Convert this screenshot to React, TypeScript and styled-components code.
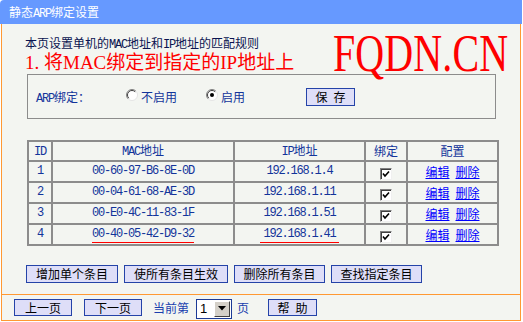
import React from 'react'
import styled, { createGlobalStyle, css } from 'styled-components'

const rows = [
  { id: 1, mac: '00-60-97-B6-8E-0D', ip: '192.168.1.4' },
  { id: 2, mac: '00-04-61-68-AE-3D', ip: '192.168.1.11' },
  { id: 3, mac: '00-E0-4C-11-83-1F', ip: '192.168.1.51' },
  { id: 4, mac: '00-40-05-42-D9-32', ip: '192.168.1.41', marked: true },
]

const colWidths = [24, 182, 131, 42, 91]
const actions = [
  { label: '增加单个条目', w: 92 },
  { label: '使所有条目生效', w: 104 },
  { label: '删除所有条目', w: 91 },
  { label: '查找指定条目', w: 91 },
]

const Radio = ({ checked }: { checked?: boolean }) => (
  <RadioIcon viewBox="0 0 12 12" width="12" height="12">
    <circle cx="6" cy="6" r="5.5" fill="#fff" />
    <path d="M2.1 9.9 A5.5 5.5 0 0 1 9.9 2.1" stroke="#808080" fill="none" />
    <path d="M2.8 9.2 A4.5 4.5 0 0 1 9.2 2.8" stroke="#404040" fill="none" />
    <path d="M9.9 2.1 A5.5 5.5 0 0 1 2.1 9.9" stroke="#e4e4e4" fill="none" />
    {checked && <circle cx="6" cy="6" r="2" fill="#000" />}
  </RadioIcon>
)

const CheckBox = () => (
  <CheckFrame>
    <svg viewBox="0 0 8 8" width="8" height="8">
      <polyline points="1,3.5 3,6 7,1.5" stroke="#000" strokeWidth="1.6" fill="none" />
    </svg>
  </CheckFrame>
)

export default function App() {
  return (
    <>
      <GlobalStyle />
      <Frame>
        <TitleBar>
          静态<Lat>ARP</Lat>绑定设置
        </TitleBar>
        <Panel>
          <Main>
            <TopRow>
              <div>
                <Note>
                  本页设置单机的<Lat>MAC</Lat>地址和<Lat>IP</Lat>地址的匹配规则
                </Note>
                <Hint>1. 将MAC绑定到指定的IP地址上</Hint>
              </div>
              <Logo>FQDN.CN</Logo>
            </TopRow>

            <SettingBox>
              <FieldLabel>
                <Lat>ARP</Lat>绑定：
              </FieldLabel>
              <Option $mr={29}>
                <Radio />
                不启用
              </Option>
              <Option>
                <Radio checked />
                启用
              </Option>
              <Button $w={49} $h={18} $ml={61}>
                保{'\u2002'}存
              </Button>
            </SettingBox>

            <Grid>
              <colgroup>
                {colWidths.map((w, i) => (
                  <col key={i} style={{ width: w }} />
                ))}
              </colgroup>
              <thead>
                <tr>
                  <HeadCell>
                    <Lat>ID</Lat>
                  </HeadCell>
                  <HeadCell>
                    <Lat>MAC</Lat>地址
                  </HeadCell>
                  <HeadCell>
                    <Lat>IP</Lat>地址
                  </HeadCell>
                  <HeadCell>绑定</HeadCell>
                  <HeadCell>配置</HeadCell>
                </tr>
              </thead>
              <tbody>
                {rows.map((r) => (
                  <tr key={r.id}>
                    <Cell $mono>{r.id}</Cell>
                    <Cell $mono>
                      <Marked $on={r.marked}>{r.mac}</Marked>
                    </Cell>
                    <Cell $mono>
                      <Marked $on={r.marked} $pad>
                        {r.ip}
                      </Marked>
                    </Cell>
                    <Cell>
                      <CheckBox />
                    </Cell>
                    <Cell>
                      <LinkGroup>
                        <TextLink>编辑</TextLink>
                        <TextLink>删除</TextLink>
                      </LinkGroup>
                    </Cell>
                  </tr>
                ))}
              </tbody>
            </Grid>

            <ActionRow>
              {actions.map((a) => (
                <Button key={a.label} $w={a.w} $h={18}>
                  {a.label}
                </Button>
              ))}
            </ActionRow>
          </Main>

          <Footer>
            <Button $w={58} $h={17}>
              上一页
            </Button>
            <Button $w={58} $h={17} $ml={12}>
              下一页
            </Button>
            <FootText $ml={11}>当前第</FootText>
            <PageSelect>
              <SelectValue>1</SelectValue>
              <DropButton>
                <svg viewBox="0 0 8 5" width="8" height="5">
                  <polygon points="0,0 8,0 4,4.5" fill="#000" />
                </svg>
              </DropButton>
            </PageSelect>
            <FootText $ml={5}>页</FootText>
            <Button $w={49} $h={17} $ml={19}>
              帮{'\u2002'}助
            </Button>
          </Footer>
        </Panel>
      </Frame>
    </>
  )
}

const GlobalStyle = createGlobalStyle`
  body {
    margin: 0;
    background: #fff;
    font-family: 'Noto Sans CJK SC', sans-serif;
    font-size: 12px;
  }
`

const Frame = styled('div')`
  width: 522px;
`

const TitleBar = styled('div')`
  height: 24px;
  line-height: 24px;
  padding-left: 9px;
  background: #6699ff;
  border-top-left-radius: 4px;
  color: #fff;
`

const Lat = styled('span')`
  font-family: 'Liberation Mono', monospace;
  letter-spacing: -1.2px;
`

const Panel = styled('div')`
  box-sizing: border-box;
  width: 520px;
  height: 297px;
  margin-left: 1px;
  display: flex;
  flex-direction: column;
  background: #f3f5f1;
  border: 1px solid #ff9933;
  border-top: none;
`

const Main = styled('div')`
  padding: 12px 11px 0 23px;
`

const TopRow = styled('div')`
  display: flex;
  justify-content: space-between;
  height: 36px;
`

const Note = styled('div')`
  line-height: 14px;
  color: #0a1450;
`

const Hint = styled('div')`
  font-family: 'Liberation Serif', 'Noto Sans CJK SC', serif;
  font-size: 19px;
  line-height: 22px;
  color: #ff0000;
  white-space: nowrap;
`

const Logo = styled('div')`
  flex-shrink: 0;
  width: 176px;
  height: 36px;
  white-space: nowrap;
  font-family: 'Liberation Serif', serif;
  font-size: 40px;
  line-height: 36px;
  letter-spacing: 0.1px;
  color: #ff0000;
  transform: scaleY(1.3);
  transform-origin: 50% 50%;
`

const SettingBox = styled('div')`
  box-sizing: border-box;
  height: 45px;
  width: 469px;
  margin: 2px 0 0 2px;
  padding-left: 8px;
  display: flex;
  align-items: center;
  border: 1px solid #8c8c8c;
  color: #12349a;
`

const FieldLabel = styled('span')`
  width: 90px;
`

const Option = styled('label')<{ $mr?: number }>`
  display: flex;
  align-items: center;
  gap: 3px;
  margin-right: ${({ $mr }) => $mr ?? 0}px;
`

const RadioIcon = styled('svg')`
  display: block;
  margin-top: -3px;
`

const Button = styled('button')<{ $w: number; $h: number; $ml?: number }>`
  box-sizing: border-box;
  width: ${({ $w }) => $w}px;
  height: ${({ $h }) => $h}px;
  margin-left: ${({ $ml }) => $ml ?? 0}px;
  padding: 0;
  background: #dedef8;
  border: 1px solid #2443a8;
  color: #000;
  font-family: 'Noto Sans CJK SC', sans-serif;
  font-size: 12px;
  line-height: 14px;
  white-space: pre;
`

const Grid = styled('table')`
  margin: 21px 0 0 2px;
  width: 470px;
  table-layout: fixed;
  border-collapse: collapse;
  color: #12349a;
`

const HeadCell = styled('th')`
  height: 18px;
  padding: 0;
  border: 2px solid #8c8c8c;
  font-weight: normal;
  text-align: center;
  line-height: 16px;
`

const Cell = styled('td')<{ $mono?: boolean }>`
  height: 19px;
  padding: 0;
  border: 2px solid #8c8c8c;
  text-align: center;
  line-height: 17px;
  ${({ $mono }) =>
    $mono &&
    css`
      font-family: 'Liberation Mono', monospace;
      letter-spacing: -1.2px;
    `}
`

const Marked = styled('span')<{ $on?: boolean; $pad?: boolean }>`
  ${({ $on, $pad }) =>
    $on &&
    css`
      display: inline-block;
      line-height: 15px;
      border-bottom: 1px solid #ff0000;
      padding: 0 ${$pad ? 3 : 0}px;
    `}
`

const CheckFrame = styled('span')`
  box-sizing: border-box;
  display: inline-flex;
  vertical-align: middle;
  align-items: center;
  justify-content: center;
  width: 12px;
  height: 12px;
  background: #fff;
  border: 1px solid;
  border-color: #808080 #f0f0f0 #f0f0f0 #808080;
  box-shadow: inset 1px 1px 0 #404040;
`

const LinkGroup = styled('span')`
  display: inline-flex;
  gap: 6px;
`

const TextLink = styled('a')`
  color: #0000ff;
  text-decoration: underline;
  cursor: pointer;
`

const ActionRow = styled('div')`
  display: flex;
  gap: 6px;
  margin: 19px 0 0 1px;
`

const Footer = styled('div')`
  margin-top: auto;
  height: 25px;
  padding-left: 12px;
  display: flex;
  align-items: center;
  border-top: 1px solid #ff9933;
`

const FootText = styled('span')<{ $ml?: number }>`
  margin-left: ${({ $ml }) => $ml ?? 0}px;
  color: #1a3fae;
`

const PageSelect = styled('div')`
  box-sizing: border-box;
  width: 36px;
  height: 20px;
  margin: 2px 0 0 7px;
  display: flex;
  background: #fff;
  border: 1px solid #1c3a96;
`

const SelectValue = styled('span')`
  flex: 1;
  padding-left: 3px;
  line-height: 18px;
  color: #000;
  font-family: 'Liberation Sans', sans-serif;
  font-size: 13px;
`

const DropButton = styled('span')`
  box-sizing: border-box;
  width: 16px;
  margin: 1px;
  display: flex;
  align-items: center;
  justify-content: center;
  background: #d4d0c8;
  border: 1px solid;
  border-color: #fff #404040 #404040 #fff;
`
